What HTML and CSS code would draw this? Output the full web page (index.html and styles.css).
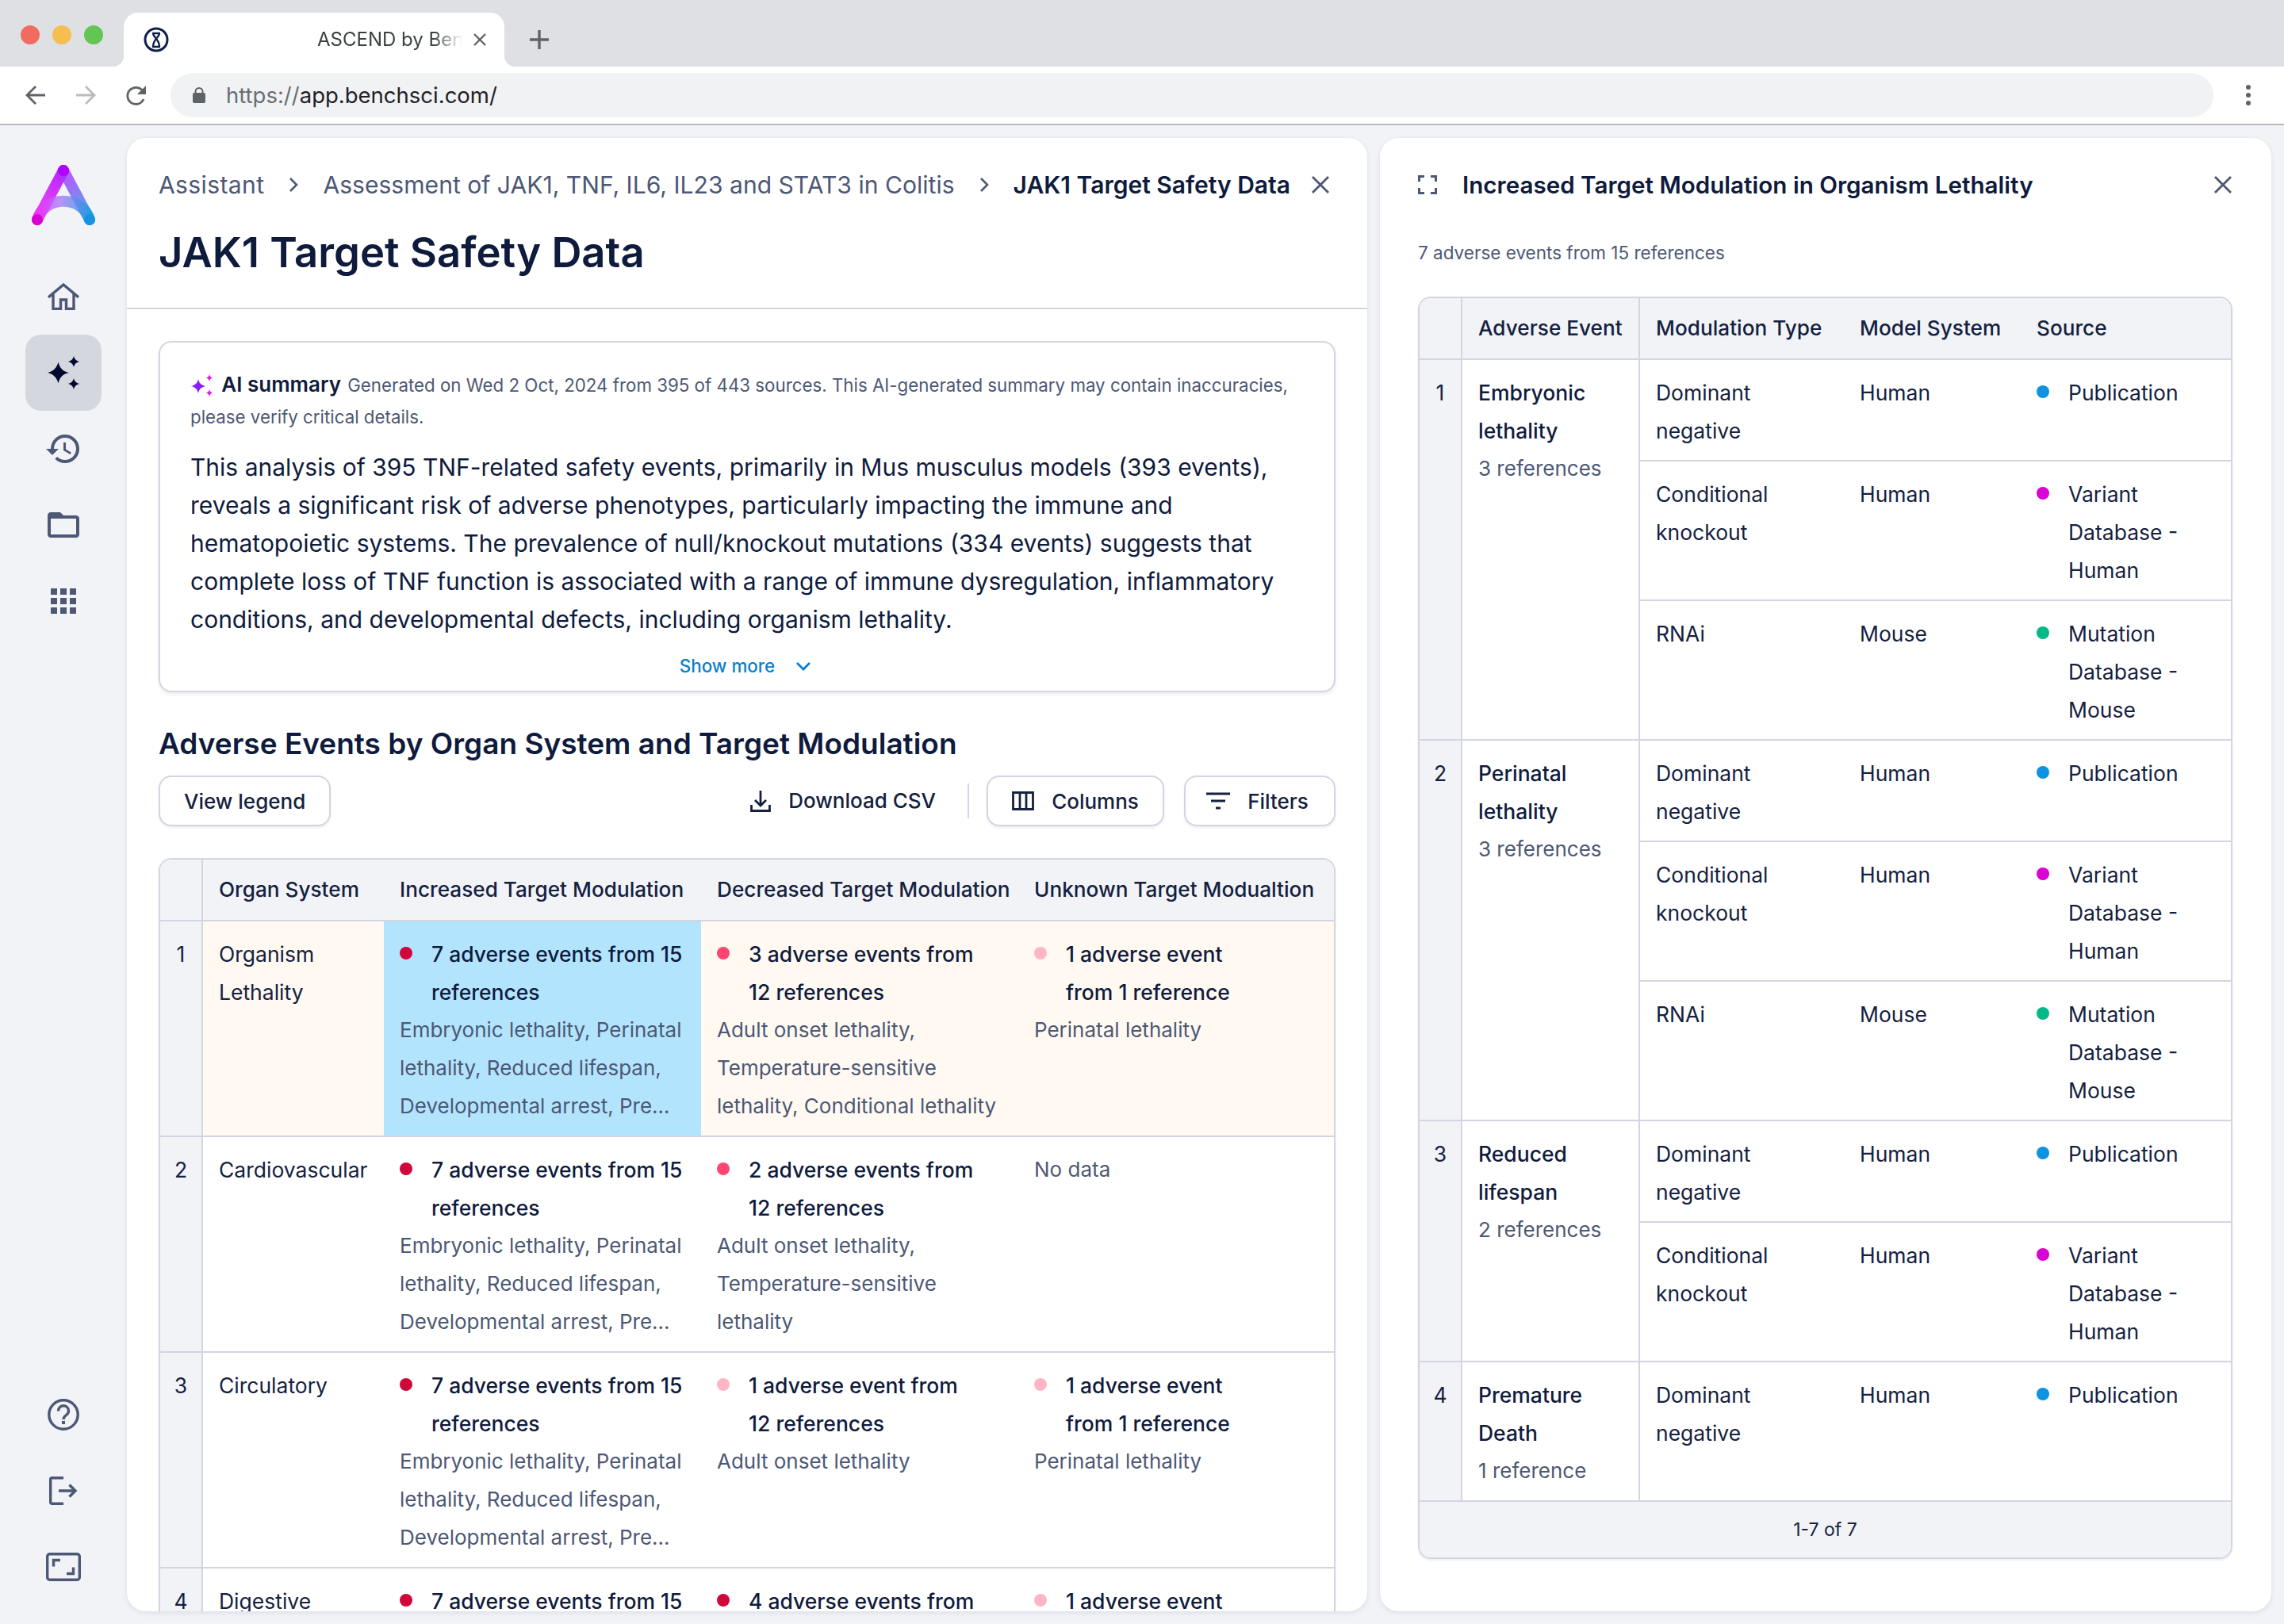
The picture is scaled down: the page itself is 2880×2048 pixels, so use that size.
FILE: index.html
```html
<!DOCTYPE html>
<html lang="en">
<head>
<meta charset="utf-8">
<title>ASCEND by BenchSci</title>
<link rel="stylesheet" href="styles.css">
</head>
<body>
<header class="chrome">
  <div class="tabbar">
    <div class="lights"><i class="light red"></i><i class="light yellow"></i><i class="light green"></i></div>
    <div class="tab">
      <svg class="favicon" viewBox="0 0 32 32"><circle cx="16" cy="16" r="14" fill="none" stroke="#10204a" stroke-width="3"/><path d="M11 8h10M11 25h10M12 8c0 5 8 7 8 17M20 8c0 5-8 7-8 17" fill="none" stroke="#10204a" stroke-width="2.4"/></svg>
      <span class="tab-title">ASCEND by BenchSci</span>
      <svg class="tab-x" viewBox="0 0 16 16"><path d="M1 1l14 14M15 1L1 15" stroke="#5f6368" stroke-width="2.4" fill="none"/></svg>
    </div>
    <svg class="newtab" viewBox="0 0 24 24"><path d="M12 0v24M0 12h24" stroke="#5f6368" stroke-width="3.4" fill="none"/></svg>
  </div>
  <div class="toolbar">
    <svg class="nav-ic" viewBox="0 0 26 26"><path d="M25 13H3M13 2L2 13l11 11" fill="none" stroke="#5f6368" stroke-width="2.8"/></svg>
    <svg class="nav-ic fwd" viewBox="0 0 26 26"><path d="M1 13h22M13 2l11 11-11 11" fill="none" stroke="#b9bbbe" stroke-width="2.8"/></svg>
    <svg class="nav-ic reload" viewBox="0 0 28 28"><path d="M23 19a10.500 10.500 0 1 1-1-10" fill="none" stroke="#5f6368" stroke-width="2.800"/><path d="M26 2v11H15z" fill="#5f6368"/></svg>
    <div class="omnibox">
      <svg class="lock" viewBox="0 0 16 20"><path d="M3.500 8V5.500a4.500 4.500 0 0 1 9 0V8" fill="none" stroke="#5f6368" stroke-width="2"/><rect y="7" width="16" height="13" rx="2" fill="#5f6368"/></svg>
      <span class="url"><span class="url-scheme">https://</span>app.benchsci.com/</span>
    </div>
    <div class="menu-dots"><i></i><i></i><i></i></div>
  </div>
</header>

<div class="app">
  <nav class="sidebar">
    <svg class="logo" viewBox="0 0 80 76">
      <defs>
        <linearGradient id="lg-left" gradientUnits="userSpaceOnUse" x1="40" y1="7" x2="7" y2="69"><stop offset="0" stop-color="#ab00ff"/><stop offset="1" stop-color="#f72cff"/></linearGradient>
        <linearGradient id="lg-right" gradientUnits="userSpaceOnUse" x1="40" y1="7" x2="73" y2="69"><stop offset="0" stop-color="#b02cff"/><stop offset="1" stop-color="#2a9be5"/></linearGradient>
        <linearGradient id="lg-arc" gradientUnits="userSpaceOnUse" x1="7" y1="0" x2="73" y2="0"><stop offset="0" stop-color="#f02cff"/><stop offset=".45" stop-color="#a47cf5"/><stop offset="1" stop-color="#1b9be0"/></linearGradient>
      </defs>
      <path d="M40 7L7 69" stroke="url(#lg-left)" stroke-width="14" stroke-linecap="round" fill="none" opacity=".85"/>
      <path d="M40 7l33 62" stroke="url(#lg-right)" stroke-width="14" stroke-linecap="round" fill="none" opacity=".8"/>
      <path d="M7 69C16 38 64 38 73 69" stroke="url(#lg-arc)" stroke-width="14" stroke-linecap="round" fill="none" opacity=".8"/>
      <circle cx="40" cy="7" r="7" fill="#b000ff"/><circle cx="7" cy="69" r="7" fill="#d800d0"/><circle cx="73" cy="69" r="7" fill="#1295e0"/>
    </svg>
    <div class="nav-group">
      <a class="nav-btn"><svg viewBox="0 0 40 34" width="40" height="34"><path d="M1 18L20 2l19 16M7 14v18.500h9.500V21h7v11.500H33V14" fill="none" stroke="#4c5875" stroke-width="3.400"/></svg></a>
      <a class="nav-btn active"><svg viewBox="0 0 40 42" width="40" height="42"><path d="M13.500 7.500c1.500 7 5.500 12 13.500 13.500-8 1.500-12 6.500-13.500 13.500C12 27.500 7 22.500 0 21c7-1.500 12-6.500 13.500-13.500zM33 0c.8 3.500 3 6 7 7-4 1-6.200 3.500-7 7-.8-3.500-3-6-7-7 4-1 6.200-3.500 7-7zM33 28c.8 3.500 3 6 7 7-4 1-6.200 3.500-7 7-.8-3.500-3-6-7-7 4-1 6.200-3.500 7-7z" fill="#020b2e"/></svg></a>
      <a class="nav-btn"><svg viewBox="1 3 22 18" width="44" height="36"><path d="M13 3a9 9 0 0 0-9 9H1l3.890 3.890.07.14L9 12H6c0-3.870 3.130-7 7-7s7 3.130 7 7-3.130 7-7 7c-1.930 0-3.680-.79-4.940-2.060l-1.420 1.420A8.954 8.954 0 0 0 13 21a9 9 0 0 0 0-18zm-1 5v5l4.280 2.540.72-1.210-3.500-2.080V8H12z" fill="#4c5875"/></svg></a>
      <a class="nav-btn"><svg viewBox="2 4 20 16" width="40" height="32"><path d="M20 6h-8l-2-2H4c-1.100 0-1.990.9-1.990 2L2 18c0 1.100.9 2 2 2h16c1.100 0 2-.9 2-2V8c0-1.100-.9-2-2-2zm0 12H4V8h16v10z" fill="#4c5875"/></svg></a>
      <a class="nav-btn"><svg viewBox="0 0 32 32" width="32" height="32" fill="#4c5875"><rect width="8" height="8"/><rect x="12" width="8" height="8"/><rect x="24" width="8" height="8"/><rect y="12" width="8" height="8"/><rect x="12" y="12" width="8" height="8"/><rect x="24" y="12" width="8" height="8"/><rect y="24" width="8" height="8"/><rect x="12" y="24" width="8" height="8"/><rect x="24" y="24" width="8" height="8"/></svg></a>
    </div>
    <div class="nav-group nav-bottom">
      <a class="nav-btn"><svg viewBox="0 0 40 40" width="40" height="40"><circle cx="20" cy="20" r="18.200" fill="none" stroke="#4c5875" stroke-width="3.400"/><path d="M13.500 15.500c0-9 13-9 13 0 0 5.500-6.500 5-6.500 10.500" fill="none" stroke="#4c5875" stroke-width="3.400"/><rect x="18" y="28" width="4" height="4" fill="#4c5875"/></svg></a>
      <a class="nav-btn"><svg viewBox="0 0 36 36" width="36" height="36"><path d="M18 1.700H3.500a1.800 1.800 0 0 0-1.800 1.800v29a1.800 1.800 0 0 0 1.800 1.800H18" fill="none" stroke="#4c5875" stroke-width="3.400"/><path d="M12 18h21M25.500 10.500L33 18l-7.500 7.500" fill="none" stroke="#4c5875" stroke-width="3.400"/></svg></a>
      <a class="nav-btn"><svg viewBox="0 0 44 36" width="44" height="36"><rect x="1.700" y="1.700" width="40.600" height="32.600" rx="3" fill="none" stroke="#4c5875" stroke-width="3.400"/><path d="M9.500 17.500V9.500H18M34.500 18.500v8H26" fill="none" stroke="#4c5875" stroke-width="3.400"/></svg></a>
    </div>
  </nav>

  <main class="panel main-panel">
    <div class="page-head">
      <div class="crumbs">
        <span class="crumb-first">Assistant</span>
        <svg class="crumb-sep" viewBox="0 0 12 20"><path d="M2 2l8 8-8 8" fill="none" stroke="#4c5875" stroke-width="2.600"/></svg>
        <span>Assessment of JAK1, TNF, IL6, IL23 and STAT3 in Colitis</span>
        <svg class="crumb-sep" viewBox="0 0 12 20"><path d="M2 2l8 8-8 8" fill="none" stroke="#4c5875" stroke-width="2.600"/></svg>
        <span class="crumb-current">JAK1 Target Safety Data</span>
        <svg class="crumb-x" viewBox="0 0 24 24"><path d="M2 2l20 20M22 2L2 22" fill="none" stroke="#4c5875" stroke-width="2.800"/></svg>
      </div>
      <h1>JAK1 Target Safety Data</h1>
    </div>

    <div class="page-body">
      <section class="summary">
        <p class="summary-head">
          <svg class="ai-ic" viewBox="0 0 30 30"><path d="M10 7c1 5 3.500 7.500 9 9-5.500 1.500-8 4-9 9-1-5-3.500-7.500-9-9 5.500-1.500 8-4 9-9z" fill="#8a1cff"/><path d="M24 1c.5 2.500 1.500 3.500 4 4.500-2.500 1-3.500 2-4 4.500-.5-2.500-1.500-3.500-4-4.500 2.500-1 3.500-2 4-4.500zM24 20c.5 2.500 1.500 3.500 4 4.500-2.500 1-3.500 2-4 4.500-.5-2.500-1.500-3.500-4-4.500 2.500-1 3.500-2 4-4.500z" fill="#e01fe8"/></svg>
          <strong>AI summary</strong>
          Generated on Wed 2 Oct, 2024 from 395 of 443 sources. This AI-generated summary may contain inaccuracies, please verify critical details.
        </p>
        <p class="summary-text">This analysis of 395 TNF-related safety events, primarily in Mus musculus models (393 events), reveals a significant risk of adverse phenotypes, particularly impacting the immune and hematopoietic systems. The prevalence of null/knockout mutations (334 events) suggests that complete loss of TNF function is associated with a range of immune dysregulation, inflammatory conditions, and developmental defects, including organism lethality.</p>
        <div class="show-more">Show more <svg viewBox="0 0 20 12"><path d="M2 2l8 8 8-8" fill="none" stroke="#0a7fcb" stroke-width="2.800"/></svg></div>
      </section>

      <h2>Adverse Events by Organ System and Target Modulation</h2>

      <div class="actions">
        <button class="btn">View legend</button>
        <span class="spacer"></span>
        <span class="link-btn"><svg viewBox="0 0 26 28" width="26" height="28"><path d="M13 1v18M6 13l7 7 7-7" fill="none" stroke="#14213f" stroke-width="2.800"/><path d="M1.500 19v7.500h23V19" fill="none" stroke="#14213f" stroke-width="2.800"/></svg>Download CSV</span>
        <span class="divider"></span>
        <button class="btn btn-cols"><svg viewBox="0 0 28 24" width="28" height="24"><path d="M1.500 1.500h25v21h-25zM10 1.500v21M18 1.500v21" fill="none" stroke="#14213f" stroke-width="2.800"/></svg>Columns</button>
        <button class="btn btn-filter"><svg viewBox="0 0 30 22" width="30" height="22"><path d="M0 2h30M6 11h18M12 20h6" fill="none" stroke="#14213f" stroke-width="3"/></svg>Filters</button>
      </div>

      <div class="tbl-wrap">
        <table class="tbl tbl-main">
          <colgroup><col class="c-num"><col class="c-organ"><col class="c-mod"><col class="c-mod"><col></colgroup>
          <thead><tr><th class="num"></th><th>Organ System</th><th>Increased Target Modulation</th><th>Decreased Target Modulation</th><th>Unknown Target Modualtion</th></tr></thead>
          <tbody>
            <tr class="warm">
              <td class="num">1</td><td>Organism Lethality</td>
              <td class="selected"><div class="ev"><i class="dot d-high"></i><b>7 adverse events from 15<br>references</b></div><div class="muted">Embryonic lethality, Perinatal<br>lethality, Reduced lifespan,<br>Developmental arrest, Pre…</div></td>
              <td><div class="ev"><i class="dot d-mid"></i><b>3 adverse events from<br>12 references</b></div><div class="muted">Adult onset lethality,<br>Temperature-sensitive<br>lethality, Conditional lethality</div></td>
              <td><div class="ev"><i class="dot d-low"></i><b>1 adverse event<br>from 1 reference</b></div><div class="muted">Perinatal lethality</div></td>
            </tr>
            <tr>
              <td class="num">2</td><td>Cardiovascular</td>
              <td><div class="ev"><i class="dot d-high"></i><b>7 adverse events from 15<br>references</b></div><div class="muted">Embryonic lethality, Perinatal<br>lethality, Reduced lifespan,<br>Developmental arrest, Pre…</div></td>
              <td><div class="ev"><i class="dot d-mid"></i><b>2 adverse events from<br>12 references</b></div><div class="muted">Adult onset lethality,<br>Temperature-sensitive<br>lethality</div></td>
              <td><div class="muted">No data</div></td>
            </tr>
            <tr>
              <td class="num">3</td><td>Circulatory</td>
              <td><div class="ev"><i class="dot d-high"></i><b>7 adverse events from 15<br>references</b></div><div class="muted">Embryonic lethality, Perinatal<br>lethality, Reduced lifespan,<br>Developmental arrest, Pre…</div></td>
              <td><div class="ev"><i class="dot d-low"></i><b>1 adverse event from<br>12 references</b></div><div class="muted">Adult onset lethality</div></td>
              <td><div class="ev"><i class="dot d-low"></i><b>1 adverse event<br>from 1 reference</b></div><div class="muted">Perinatal lethality</div></td>
            </tr>
            <tr>
              <td class="num">4</td><td>Digestive</td>
              <td><div class="ev"><i class="dot d-high"></i><b>7 adverse events from 15<br>references</b></div></td>
              <td><div class="ev"><i class="dot d-high"></i><b>4 adverse events from<br>12 references</b></div></td>
              <td><div class="ev"><i class="dot d-low"></i><b>1 adverse event<br>from 1 reference</b></div></td>
            </tr>
          </tbody>
        </table>
      </div>
    </div>
  </main>

  <aside class="panel side-panel">
    <div class="side-head">
      <svg class="side-expand" viewBox="0 0 24 24"><path d="M1.500 8V1.500H8M16 1.500h6.500V8M22.500 16v6.500H16M8 22.500H1.500V16" fill="none" stroke="#4c5875" stroke-width="3"/></svg>
      <h3>Increased Target Modulation in Organism Lethality</h3>
      <svg class="side-x" viewBox="0 0 24 24"><path d="M2 2l20 20M22 2L2 22" fill="none" stroke="#4c5875" stroke-width="2.800"/></svg>
    </div>
    <p class="side-sub">7 adverse events from 15 references</p>
    <div class="tbl-wrap">
      <table class="tbl tbl-side">
        <colgroup><col class="s-num"><col class="s-event"><col class="s-type"><col class="s-model"><col></colgroup>
        <thead><tr><th class="num"></th><th class="vline">Adverse Event</th><th>Modulation Type</th><th>Model System</th><th>Source</th></tr></thead>
        <tbody>
          <tr>
            <td class="num" rowspan="3">1</td><td class="vline" rowspan="3"><b>Embryonic lethality</b><div class="muted">3 references</div></td>
            <td>Dominant negative</td><td>Human</td><td><div class="src"><i class="dot s-pub"></i>Publication</div></td>
          </tr>
          <tr><td>Conditional knockout</td><td>Human</td><td><div class="src"><i class="dot s-var"></i><span>Variant Database - Human</span></div></td></tr>
          <tr><td>RNAi</td><td>Mouse</td><td><div class="src"><i class="dot s-mut"></i><span>Mutation Database - Mouse</span></div></td></tr>
          <tr>
            <td class="num" rowspan="3">2</td><td class="vline" rowspan="3"><b>Perinatal lethality</b><div class="muted">3 references</div></td>
            <td>Dominant negative</td><td>Human</td><td><div class="src"><i class="dot s-pub"></i>Publication</div></td>
          </tr>
          <tr><td>Conditional knockout</td><td>Human</td><td><div class="src"><i class="dot s-var"></i><span>Variant Database - Human</span></div></td></tr>
          <tr><td>RNAi</td><td>Mouse</td><td><div class="src"><i class="dot s-mut"></i><span>Mutation Database - Mouse</span></div></td></tr>
          <tr>
            <td class="num" rowspan="2">3</td><td class="vline" rowspan="2"><b>Reduced lifespan</b><div class="muted">2 references</div></td>
            <td>Dominant negative</td><td>Human</td><td><div class="src"><i class="dot s-pub"></i>Publication</div></td>
          </tr>
          <tr><td>Conditional knockout</td><td>Human</td><td><div class="src"><i class="dot s-var"></i><span>Variant Database - Human</span></div></td></tr>
          <tr>
            <td class="num">4</td><td class="vline"><b>Premature Death</b><div class="muted">1 reference</div></td>
            <td>Dominant negative</td><td>Human</td><td><div class="src"><i class="dot s-pub"></i>Publication</div></td>
          </tr>
        </tbody>
      </table>
      <div class="tbl-foot">1-7 of 7</div>
    </div>
  </aside>
</div>
</body>
</html>
```

FILE: styles.css
```css
* { box-sizing: border-box; }
html, body { margin: 0; height: 2048px; overflow: hidden; }
body { font-family: Inter, "Liberation Sans", sans-serif; color: #0f1b3d; background: #f1f3f7; font-size: 26.5px; line-height: 48px; }
p, h1, h2, h3 { margin: 0; }

.chrome { height: 158px; background: #fff; border-bottom: 2px solid #b8b9bc; }
.tabbar { height: 84px; background: #dfe0e4; display: flex; align-items: flex-end; padding-left: 26px; }
.lights { display: flex; gap: 16px; align-self: flex-start; margin-top: 32px; width: 130px; }
.light { width: 24px; height: 24px; border-radius: 50%; }
.red { background: #f26b60; } .yellow { background: #f6bd4f; } .green { background: #62c554; }
.tab { position: relative; width: 480px; height: 68px; background: #fff; border-radius: 18px 18px 0 0; display: flex; align-items: center; padding-left: 25px; }
.tab::before, .tab::after { content: ""; position: absolute; bottom: 0; width: 14px; height: 14px; }
.tab::before { left: -14px; background: radial-gradient(circle at 0 0, #dfe0e4 14px, #fff 14.5px); }
.tab::after { right: -14px; background: radial-gradient(circle at 100% 0, #dfe0e4 14px, #fff 14.5px); }
.favicon { width: 32px; height: 32px; }
.tab-title { margin-left: 187px; width: 183px; overflow: hidden; white-space: nowrap; font-size: 24px; color: #3c4043; -webkit-mask-image: linear-gradient(90deg, #000 80%, transparent 100%); mask-image: linear-gradient(90deg, #000 80%, transparent 100%); }
.tab-x { width: 16px; height: 16px; margin-left: 14px; }
.newtab { width: 24px; height: 24px; margin: 0 0 22px 32px; }
.toolbar { height: 72px; display: flex; align-items: center; padding-left: 32px; }
.nav-ic { width: 26px; height: 26px; margin-right: 37px; }
.nav-ic.reload { width: 28px; height: 28px; margin-right: 29px; }
.omnibox { width: 2576px; height: 56px; border-radius: 28px; background: #f1f2f4; display: flex; align-items: center; padding-left: 28px; }
.lock { width: 16px; height: 20px; margin-right: 26px; }
.url { font-size: 27.5px; color: #202124; }
.url-scheme { color: #6a6d72; }
.menu-dots { margin-left: 41px; display: flex; flex-direction: column; gap: 4px; }
.menu-dots i { width: 6px; height: 6px; border-radius: 50%; background: #5f6368; }

.app { display: flex; height: 1890px; padding: 16px 16px 16px 0; }
.sidebar { width: 160px; flex: none; display: flex; flex-direction: column; align-items: center; padding-top: 34px; padding-bottom: 8px; }
.logo { width: 80px; height: 76px; margin-bottom: 42px; }
.nav-group { display: flex; flex-direction: column; }
.nav-bottom { margin-top: auto; }
.nav-btn { width: 96px; height: 96px; display: flex; align-items: center; justify-content: center; border-radius: 20px; }
.nav-btn.active { background: #d5d7de; }

.panel { background: #fff; border-radius: 24px; overflow: hidden; box-shadow: 0 2px 6px rgba(30, 40, 80, .1); }
.main-panel { width: 1564px; flex: none; }
.side-panel { flex: 1; margin-left: 16px; padding: 0 49px 0 48px; }

.page-head { height: 216px; padding: 35px 40px 0; border-bottom: 2px solid #d3d5e2; }
.crumbs { display: flex; align-items: center; color: #4c5875; font-size: 30.1px; white-space: nowrap; }
.crumb-first { letter-spacing: .35px; }
.crumb-sep { flex: none; width: 12px; height: 20px; margin: 0 31px; }
.crumb-current { color: #0f1b3d; font-weight: 600; font-size: 30px; }
.crumb-x { flex: none; width: 24px; height: 24px; margin-left: 26px; }
h1 { font-size: 52.6px; line-height: 72px; font-weight: 600; margin-top: 25px; }

.page-body { padding: 40px 40px 0; }
.summary { border: 2px solid #d3d5e2; border-radius: 16px; padding: 33px 38px 0; height: 443px; box-shadow: 0 3px 4px rgba(30, 40, 80, .08); }
.summary-head { font-size: 22.3px; line-height: 40px; color: #4c5875; }
.summary-head strong { font-size: 26px; font-weight: 600; color: #0f1b3d; margin-right: 2px; }
.ai-ic { width: 30px; height: 30px; vertical-align: -7px; margin-right: 3px; }
.summary-text { margin-top: 19px; font-size: 30px; color: #0f1b3d; }
.show-more { display: flex; justify-content: center; align-items: center; gap: 26px; color: #0a7fcb; font-size: 22.4px; font-weight: 500; line-height: 46px; padding: 12px 4px 0 0; }
.show-more svg { width: 20px; height: 12px; }

h2 { font-size: 37px; line-height: 56px; font-weight: 600; margin-top: 37px; }
.actions { display: flex; align-items: center; margin-top: 12px; }
.spacer { flex: 1; }
.btn { height: 64px; font: 500 26px Inter, sans-serif; color: #14213f; background: #fff; border: 2px solid #d3d5e2; border-radius: 16px; padding: 0 30px; display: flex; align-items: center; box-shadow: 0 2px 3px rgba(30, 40, 80, .08); }
.btn svg { margin-right: 22px; }
.btn-cols { margin-left: 22px; width: 224px; justify-content: center; padding: 0; }
.btn-filter { margin-left: 25px; width: 191px; justify-content: center; padding: 0 6px 0 0; }
.link-btn { display: flex; align-items: center; font-weight: 500; font-size: 26px; color: #14213f; margin-right: -2px; }
.link-btn svg { margin-right: 22px; }
.divider { width: 2px; height: 44px; background: #d3d5e2; margin-left: 42px; }

.tbl-wrap { margin-top: 40px; border: 2px solid #d3d5e2; border-radius: 16px; overflow: hidden; box-shadow: 0 2px 3px rgba(30, 40, 80, .08); }
.tbl { width: 100%; border-collapse: separate; border-spacing: 0; table-layout: fixed; }
.tbl th { height: 78px; padding: 0 20px; text-align: left; font-weight: 500; font-size: 26.2px; background: #f1f3f7; border-bottom: 2px solid #d3d5e2; white-space: nowrap; color: #14213f; }
.tbl td { padding: 17px 20px 13px; vertical-align: top; border-bottom: 2px solid #d3d5e2; color: #14213f; }
.tbl .num { padding: 17px 0 13px; text-align: center; background: #f1f3f7; border-right: 2px solid #d3d5e2; color: #14213f; }
.tbl th.num { padding: 0; }
.tbl b { display: block; font-weight: 500; font-size: 26.5px; color: #0f1b3d; }
.c-num { width: 54px; } .c-organ { width: 228px; } .c-mod { width: 400px; }
.warm td { background: #fff9f1; }
.tbl .warm .selected { background: #b3e4fe; }
.ev { display: flex; }
.dot { flex: none; width: 16px; height: 16px; border-radius: 50%; margin: 15px 24px 0 0; }
.d-high { background: #d1063b; } .d-mid { background: #ff4673; } .d-low { background: #ffb6c4; }
.muted { color: #4c5875; font-size: 26px; white-space: nowrap; }

.side-head { display: flex; align-items: center; height: 48px; margin-top: 35px; }
.side-expand { flex: none; width: 24px; height: 24px; margin-right: 32px; }
h3 { font-size: 29.6px; font-weight: 600; flex: 1; }
.side-x { flex: none; width: 24px; height: 24px; }
.side-sub { font-size: 22.5px; line-height: 40px; color: #4c5875; margin-top: 42px; }
.side-panel .tbl-wrap { margin-top: 35px; }
.s-num { width: 54px; } .s-event { width: 224px; } .s-type { width: 257px; } .s-model { width: 223px; }
.tbl .vline { border-right: 2px solid #d3d5e2; }
.src { display: flex; }
.s-pub { background: #0f93e0; } .s-var { background: #d903d5; } .s-mut { background: #04b887; }
.tbl-foot { height: 70px; background: #f1f3f7; text-align: center; font-size: 23px; line-height: 70px; color: #14213f; }
```
